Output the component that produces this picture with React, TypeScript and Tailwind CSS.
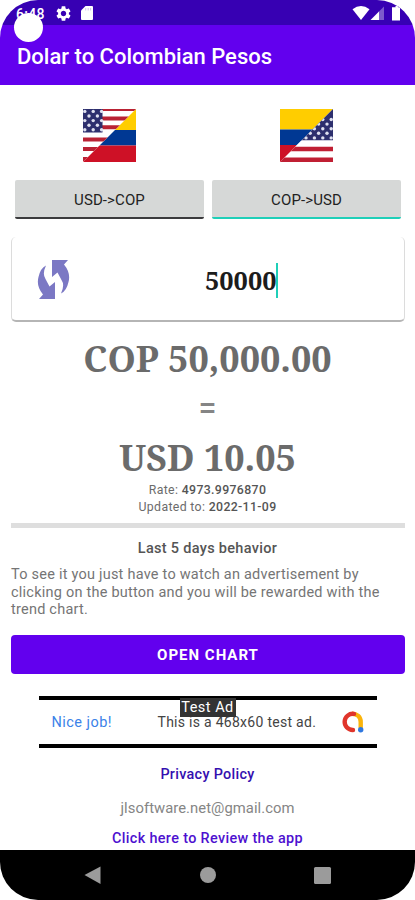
import React from "react";

function Stars({ x, y, cols = 5 }: { x: number; y: number; cols?: number }) {
  const dots: React.ReactElement[] = [];
  for (let r = 0; r < 5; r++) {
    for (let c = 0; c < cols; c++) {
      if ((r + c) % 2 === 0) {
        dots.push(<circle key={`${r}-${c}`} cx={x + c * 4.2} cy={y + r * 4.6} r="1.7" fill="#dfe1f0" />);
      }
    }
  }
  return <g>{dots}</g>;
}

function FlagUsdCop() {
  return (
    <svg className="h-[53px] w-[53px]" viewBox="0 0 53 53">
      <defs>
        <clipPath id="usHalf">
          <path d="M0 0H53L0 53Z" />
        </clipPath>
      </defs>
      <rect width="53" height="21" fill="#ffcd00" />
      <rect y="21" width="53" height="15.5" fill="#003893" />
      <rect y="36.5" width="53" height="16.5" fill="#ce1126" />
      <g clipPath="url(#usHalf)">
        <rect width="53" height="53" fill="#fff" />
        <path d="M0 0H53M0 9.5H53M0 18.3H53M0 30.5H53M0 40H53M0 50H53" stroke="#b92234" strokeWidth="4" />
        <rect width="19.5" height="23.5" fill="#2d2f6e" />
        <Stars x={1.8} y={2.4} />
      </g>
    </svg>
  );
}

function FlagCopUsd() {
  return (
    <svg className="h-[53px] w-[53px]" viewBox="0 0 53 53">
      <defs>
        <clipPath id="usLower">
          <path d="M53 0V53H0Z" />
        </clipPath>
      </defs>
      <rect width="53" height="20.5" fill="#ffcd00" />
      <rect y="20.5" width="53" height="15.5" fill="#003893" />
      <rect y="36" width="53" height="17" fill="#ce1126" />
      <g clipPath="url(#usLower)">
        <rect width="53" height="53" fill="#fff" />
        <rect width="53" height="31.5" fill="#2d2f6e" />
        <Stars x={26} y={10.5} cols={7} />
        <rect y="31.5" width="53" height="6" fill="#fff" />
        <path d="M0 40H53M0 50.8H53" stroke="#c01f33" strokeWidth="4.6" />
      </g>
    </svg>
  );
}

function StatusBar() {
  return (
    <div className="relative flex h-[25px] shrink-0 items-start bg-[#3700b3] text-white">
      <span className="mt-[5px] ml-[16px] w-[30px] text-[14px] leading-[18px] font-medium tracking-[0.3px]">6:48</span>
      <svg className="mt-[6px] ml-[10px] h-[15px] w-[15px]" viewBox="2 2 20 20" fill="#fff">
        <path fillRule="evenodd" d="M19.14 12.94c.04-.3.06-.61.06-.94 0-.32-.02-.64-.07-.94l2.03-1.58c.18-.14.23-.41.12-.61l-1.92-3.32c-.12-.22-.37-.29-.59-.22l-2.39.96c-.5-.38-1.03-.7-1.62-.94L14.4 2.81c-.04-.24-.24-.41-.48-.41h-3.84c-.24 0-.43.17-.47.41L9.25 5.35c-.59.24-1.13.57-1.62.94l-2.39-.96c-.22-.08-.47 0-.59.22L2.74 8.87c-.12.21-.08.47.12.61l2.03 1.58c-.05.3-.09.63-.09.94s.02.64.07.94l-2.03 1.58c-.18.14-.23.41-.12.61l1.92 3.32c.12.22.37.29.59.22l2.39-.96c.5.38 1.03.7 1.62.94l.36 2.54c.05.24.24.41.48.41h3.84c.24 0 .44-.17.47-.41l.36-2.54c.59-.24 1.13-.56 1.62-.94l2.39.96c.22.08.47 0 .59-.22l1.92-3.32c.12-.22.07-.47-.12-.61l-2.01-1.58zM12 15.6c-1.98 0-3.6-1.62-3.6-3.6s1.62-3.6 3.6-3.6 3.6 1.62 3.6 3.6-1.62 3.6-3.6 3.6z" />
      </svg>
      <svg className="mt-[6px] ml-[10px] h-[14px] w-[12px]" viewBox="0 0 12 14">
        <path d="M4.5 0H11Q12 0 12 1V13Q12 14 11 14H1Q0 14 0 13V4.5Z" fill="#fff" />
        <path d="M4.7 2V4.5M7.2 2V4.5M9.6 2V4.5" stroke="#d3c6ee" strokeWidth="1" />
      </svg>
      <svg className="mt-[6px] mr-[14px] ml-auto h-[15px] w-[49px]" viewBox="0 0 49 15">
        <path d="M0.5 3.2Q9 -3.2 17.5 3.2L9 14Z" fill="#fff" />
        <path d="M32 0.5V14H27V5.5Z" fill="#7d5acb" />
        <path d="M27 5.5V14H18.5Z" fill="#fff" />
        <path d="M42 1.2H43.5V0H46V1.2H48V14.5H40V1.2Z" fill="#fff" />
      </svg>
      <div className="absolute top-[13px] left-[14px] h-[29px] w-[29px] rounded-full bg-white" />
    </div>
  );
}

function ModeButton({ label, active }: { label: string; active?: boolean }) {
  return (
    <button
      className={
        "h-[39px] w-[189px] rounded-[2px] border-b-2 bg-[#d6d8d7] pt-[3px] text-[15px] leading-[18px] tracking-[0.1px] text-[#222] " +
        (active ? "border-[#1fcfb8]" : "border-[#3b3b3d]")
      }
    >
      {label}
    </button>
  );
}

function AdBanner() {
  return (
    <div className="relative mx-auto mt-[22px] flex h-[52px] w-[338px] shrink-0 items-center border-y-4 border-black bg-white text-[#444]">
      <span className="ml-[13px] w-[61px] pt-[1px] text-[14.5px] tracking-[0.45px] whitespace-nowrap text-[#3b82e8]">Nice job!</span>
      <span className="ml-[45px] w-[160px] text-[14px] tracking-[0.28px] whitespace-nowrap">This is a 468x60 test ad.</span>
      <svg className="ml-[23px] h-[24px] w-[24px]" viewBox="0 0 24 24" fill="none">
        <path d="M11 3.7C16 3.7 19.7 7 19.7 12V18" stroke="#fbb40a" strokeWidth="4.4" />
        <path d="M13 3.9A8.1 8.1 0 1 0 12 20" stroke="#e0352b" strokeWidth="4.4" strokeLinecap="round" />
        <circle cx="19.7" cy="19.8" r="2.7" fill="#2f78e0" />
      </svg>
      <div className="absolute top-[-2px] left-[141px] h-[19px] w-[56px] bg-[#333] text-center text-[14.5px] leading-[20px] tracking-[0.5px] whitespace-nowrap text-white">
        Test Ad
      </div>
    </div>
  );
}

export default function App() {
  return (
    <div className="h-[900px] w-[415px] overflow-hidden bg-white">
      <div className="flex h-[900px] flex-col overflow-hidden rounded-[38px] bg-white font-[Roboto,sans-serif] text-[#757575]">
        <StatusBar />
        <header className="flex h-[60px] shrink-0 items-center bg-[#6200ee] pl-[17px]">
          <h1 className="pt-[3px] text-[22px] leading-[28px] font-medium whitespace-nowrap text-white">Dolar to Colombian Pesos</h1>
        </header>

        <main className="flex h-[765px] shrink-0 flex-col px-[11px]">
          <div className="mt-[23.5px] flex shrink-0 gap-[144px] pl-[72px]">
            <FlagUsdCop />
            <FlagCopUsd />
          </div>

          <div className="mt-[18.5px] flex shrink-0 gap-[8px] pl-[4px]">
            <ModeButton label="USD->COP" />
            <ModeButton label="COP->USD" active />
          </div>

          <section className="mt-[18px] flex h-[85px] w-[394px] shrink-0 items-center rounded-[5px] border-x border-b-2 border-x-[#dcdcdc] border-b-[#b5b5b5]">
            <svg className="mt-[2px] ml-[25px] h-[39px] w-[33px]" viewBox="0 0 33 39" fill="#7b78c4">
              <path d="M15 0H31L27 4.5Q34 13 31.5 22Q29.5 31 24 33.5Q28 25 24.5 20L20.5 12.5L15 17Z" />
              <path d="M18 39H2L6 34.5Q-1 26 1.5 17Q3.5 8 9 5.5Q5 14 8.5 19L12.5 26.5L18 22Z" />
            </svg>
            <div className="mt-[3px] ml-[135px] flex items-center">
              <span className="block h-[35px] w-[71px] font-['Noto_Serif',serif] text-[25.3px] leading-[34px] font-bold text-[#1c1c1c]">50000</span>
              <span className="h-[35px] w-[2px] bg-[#1fcfb8]" />
            </div>
          </section>

          <section className="flex shrink-0 flex-col items-center text-[#6b6b6b]">
            <div className="mt-[11px] h-[51px] font-['Noto_Serif',serif] text-[36px] leading-[52px] font-bold whitespace-nowrap">COP 50,000.00</div>
            <div className="h-[48px] text-[32px] leading-[46px] font-medium text-[#858585]">=</div>
            <div className="h-[50px] font-['Noto_Serif',serif] text-[36px] leading-[52px] font-bold whitespace-nowrap">USD 10.05</div>
            <p className="h-[17px] text-[12.3px] leading-[17px] tracking-[0.35px]">Rate: <span className="font-medium text-[#555]">4973.9976870</span></p>
            <p className="h-[17px] text-[12.3px] leading-[17px] tracking-[0.35px]">Updated to: <span className="font-medium text-[#555]">2022-11-09</span></p>
          </section>

          <div className="mt-[7px] h-[5px] w-[394px] shrink-0 bg-[#dedede]" />
          <h2 className="mt-[11px] text-center text-[14.5px] leading-[20px] font-medium tracking-[0.3px] text-[#555]">Last 5 days behavior</h2>
          <p className="mt-[7px] text-[14.5px] leading-[17.7px] tracking-[0.23px] whitespace-nowrap text-[#757575]">
            To see it you just have to watch an advertisement by
            <br />
            clicking on the button and you will be rewarded with the
            <br />
            trend chart.
          </p>
          <button className="mt-[16px] h-[39px] w-[394px] shrink-0 rounded-[4px] bg-[#6200ee] pt-[2px] text-[15px] font-bold tracking-[1px] text-white">OPEN CHART</button>

          <AdBanner />

          <footer className="flex flex-col items-center">
            <a className="mt-[17px] text-[14.4px] leading-[20px] font-medium tracking-[0.3px] text-[#3410b0]">Privacy Policy</a>
            <span className="mt-[13px] text-[14.8px] leading-[20px] tracking-[0.05px] text-[#858585]">jlsoftware.net@gmail.com</span>
            <a className="mt-[11px] text-[14.4px] leading-[20px] font-medium tracking-[0.35px] text-[#4d10d0]">Click here to Review the app</a>
          </footer>
        </main>

        <nav className="h-[50px] shrink-0 bg-black">
          <svg className="h-[50px] w-[415px]" viewBox="0 0 415 50" fill="#9b9b9b">
            <path d="M84.5 25L100.5 16.5V34Z" />
            <circle cx="208" cy="25" r="8" />
            <rect x="314" y="17" width="17" height="17" rx="1.5" />
          </svg>
        </nav>
      </div>
    </div>
  );
}
